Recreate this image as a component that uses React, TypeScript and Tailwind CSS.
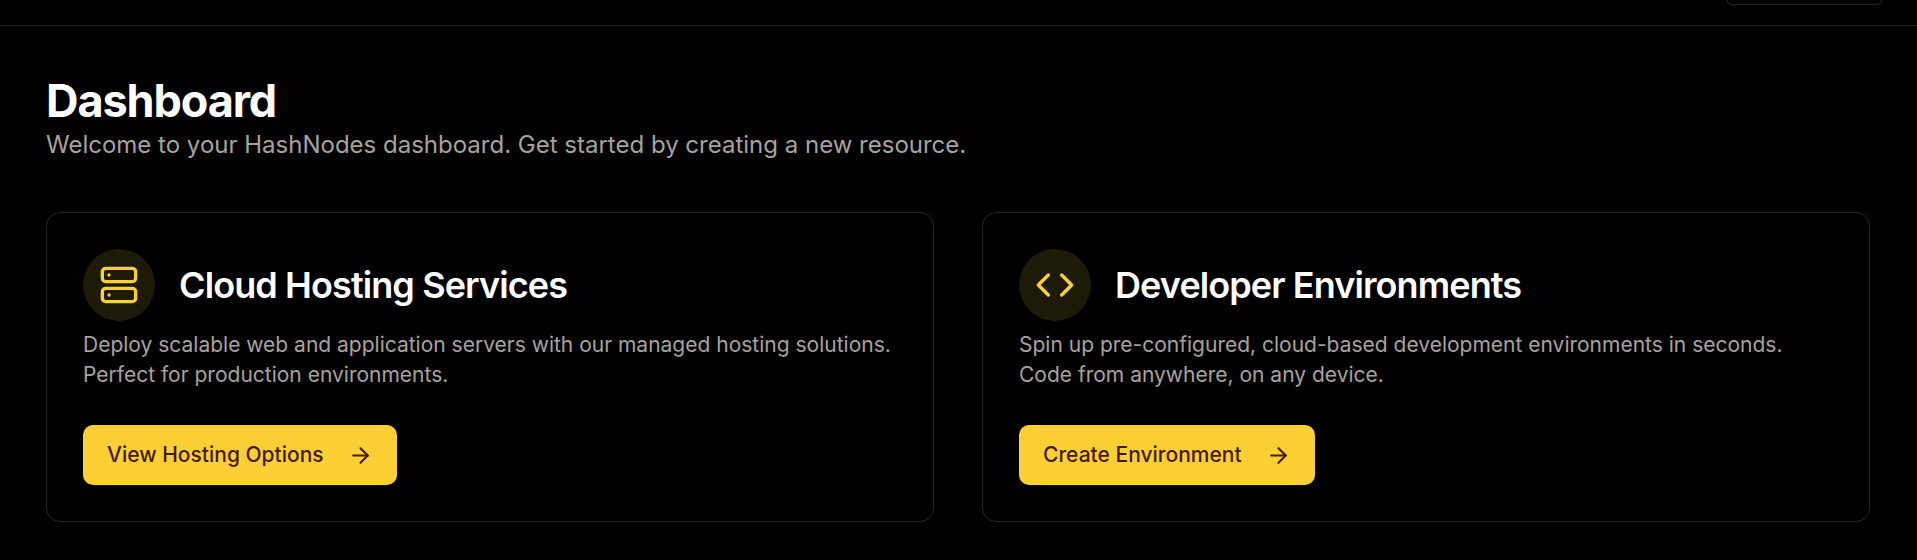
import { ArrowRight, Code, Server } from "lucide-react";
import type { ReactNode } from "react";

function ResourceCard({
  icon,
  title,
  lines,
  action,
}: {
  icon: ReactNode;
  title: string;
  lines: string[];
  action: string;
}) {
  return (
    <div className="flex-1 rounded-[14px] border border-[#262626] p-9">
      <div className="flex items-center gap-[24px]">
        <div className="flex h-[72px] w-[72px] items-center justify-center rounded-full bg-[#1e1a08] text-[#fcd034]">
          {icon}
        </div>
        <h2 className="text-[36px] leading-[40px] font-semibold tracking-[-0.9px] text-white">{title}</h2>
      </div>
      <p className="mt-[9px] text-[21px] leading-[30px] text-[#a8a29e]">
        {lines[0]}
        <br />
        {lines[1]}
      </p>
      <button className="mt-[35px] flex h-[60px] items-center gap-[24px] rounded-[10px] bg-[#fcd034] px-6 text-[21px] font-medium text-[#451a03]">
        {action}
        <ArrowRight className="h-[25px] w-[25px]" />
      </button>
    </div>
  );
}

export default function App() {
  return (
    <div className="min-h-[560px] bg-black font-['Inter',sans-serif]">
      <header className="flex h-[26px] justify-end border-b border-[#262626] pr-[35px]">
        <div className="h-[5px] w-[155px] rounded-b-[8px] border border-t-0 border-[#262626]" />
      </header>
      <main className="pl-[46px] pr-[47px] pt-[50px]">
        <h1 className="text-[45px] leading-[50px] font-bold tracking-[-1.1px] text-white">Dashboard</h1>
        <p className="mt-[3px] text-[24px] leading-[32px] text-[#a8a29e]">
          Welcome to your HashNodes dashboard. Get started by creating a new resource.
        </p>
        <div className="mt-[51px] flex gap-[48px]">
          <ResourceCard
            icon={<Server className="h-10 w-10" />}
            title="Cloud Hosting Services"
            lines={[
              "Deploy scalable web and application servers with our managed hosting solutions.",
              "Perfect for production environments.",
            ]}
            action="View Hosting Options"
          />
          <ResourceCard
            icon={<Code className="h-10 w-10" />}
            title="Developer Environments"
            lines={[
              "Spin up pre-configured, cloud-based development environments in seconds.",
              "Code from anywhere, on any device.",
            ]}
            action="Create Environment"
          />
        </div>
      </main>
    </div>
  );
}
